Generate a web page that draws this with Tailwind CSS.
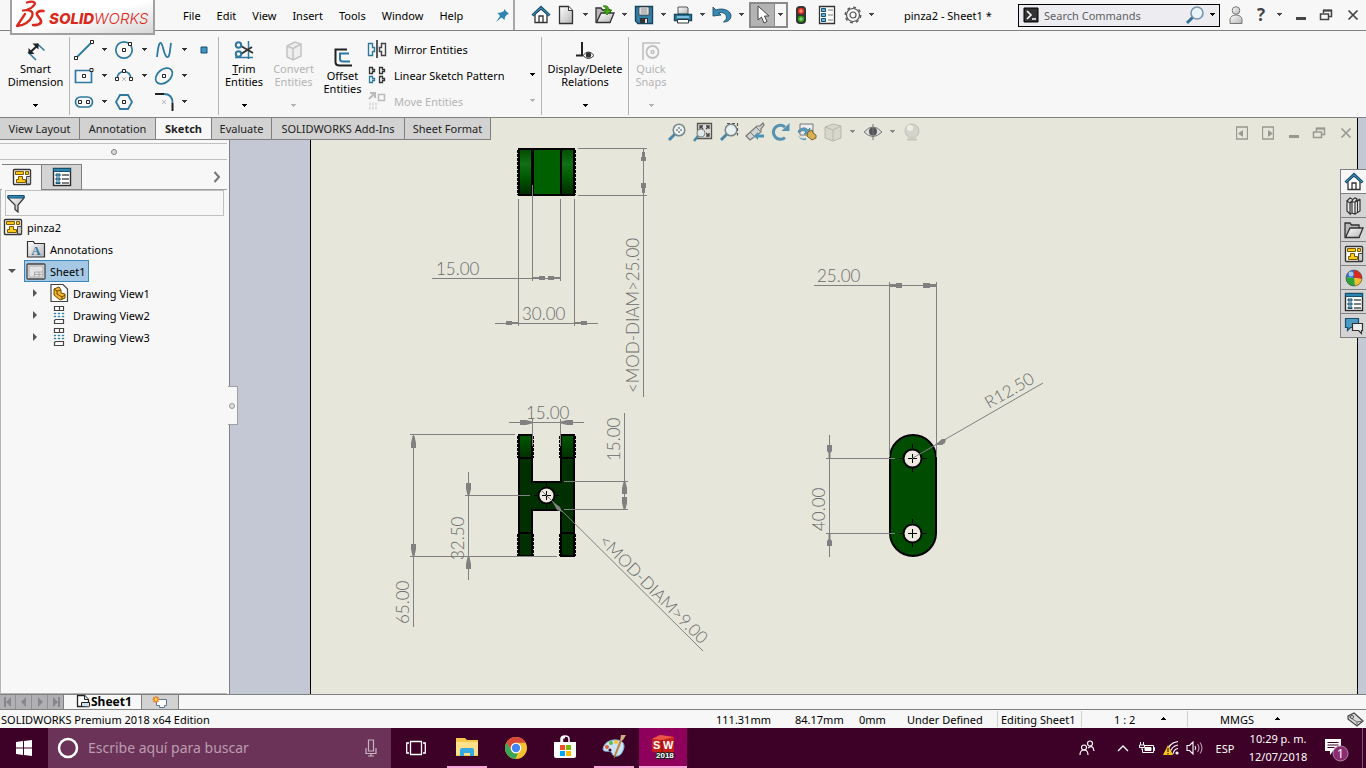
<!DOCTYPE html>
<html lang="en">
<head>
<meta charset="utf-8">
<title>pinza2 - Sheet1</title>
<script src="https://cdn.jsdelivr.net/npm/@tailwindcss/browser@4"></script>
</head>
<body class="h-screen overflow-hidden flex flex-col bg-[#f7f7f7] text-black text-[11px] leading-[13px] font-['Noto_Sans',sans-serif]">

<!-- Shared icons -->
<svg class="absolute size-0" aria-hidden="true">
  <defs>
    <linearGradient id="grey" x1="0" y1="0" x2="1" y2="1"><stop offset="0" stop-color="#fff"/><stop offset="1" stop-color="#b5b5b5"/></linearGradient>
    <linearGradient id="shade" x1="0" y1="0" x2="0" y2="1"><stop offset="0" stop-color="#004a00"/><stop offset=".32" stop-color="#107014"/><stop offset=".6" stop-color="#005a00"/><stop offset="1" stop-color="#002a00"/></linearGradient>
    <linearGradient id="shade2" x1="0" y1="0" x2="0" y2="1"><stop offset="0" stop-color="#005800"/><stop offset="1" stop-color="#003000"/></linearGradient>
    <symbol id="caret" viewBox="0 0 7 4"><path d="M1 0h5v1h-1v1h-1v1h-1v-1h-1v-1h-1z" fill="currentColor"/></symbol>
    <symbol id="caretup" viewBox="0 0 7 4"><path d="M1 3h5v-1h-1v-1h-1v-1h-1v1h-1v1h-1z" fill="currentColor"/></symbol>
    <symbol id="home" viewBox="0 0 20 20"><path d="M4 9v8.500h12V9l-6-5z" fill="#fff" stroke="#333" stroke-width="1.300"/><path d="M1.500 10.500 10 2.500l8.500 8" fill="none" stroke="#174f6e" stroke-width="3"/><path d="M2 10 10 2.800l8 7.200" fill="none" stroke="#4aa0c8" stroke-width="1"/><path d="M8 17v-6h4v6" fill="none" stroke="#333" stroke-width="1.300"/></symbol>
    <symbol id="draw" viewBox="0 0 20 20"><rect x="1.500" y="2.500" width="17" height="15" rx="1" fill="#fff" stroke="#333" stroke-width="1.400"/><path d="M3.500 4.500h8v3h-8zM13.500 4.500h3v3h-3zM6.500 9.500h4v3h3v3h-9v-3h2z" fill="#fbc91c" stroke="#7d5900" stroke-width="1"/><path d="M14.500 17V9.500h4V17z" fill="#ccc" stroke="#444"/></symbol>
    <symbol id="list" viewBox="0 0 20 20"><rect x="1.500" y="1.500" width="17" height="17" fill="#fff" stroke="#2c2c2c" stroke-width="1.400"/><path d="M1.500 1.500h17v3h-17z" fill="#2d86b0" stroke="#174f6e"/><path d="M4 7h4v2H4zM4 11h4v2H4zM4 15h4v1.500H4z" fill="#6fc1e5" stroke="#174f6e"/><path d="M10 8h7M10 12h7M10 16h7" stroke="#555" stroke-width="1.300"/></symbol>
    <symbol id="folder" viewBox="0 0 20 20"><path d="M1 17V3h5l1.500 2H15v12z" fill="#b9b9b9" stroke="#333" stroke-width="1.300"/><path d="M1.500 17.500 6 8h13l-4 9.500z" fill="url(#grey)" stroke="#333" stroke-width="1.300"/></symbol>
    <symbol id="view" viewBox="0 0 14 20"><path d="M2.500 1.500h9v4h-9zM7.500 1.500v4M3.500 14.500h8v4h-9v-3z" fill="#fff" stroke="#444" stroke-width="1.200"/><path d="M2 8h2v1H2zM6 8h2v1H6zM10 8h2v1h-2zM2 11h2v1H2zM6 11h2v1H6zM10 11h2v1h-2z" fill="#2d86b0" stroke="#2d86b0" stroke-width=".4"/></symbol>
    <symbol id="restore" viewBox="0 0 14 12"><path d="M4.500 4V1.500h8v6H10" fill="none" stroke="currentColor" stroke-width="1.500"/><path d="M4 1.500h9" stroke="currentColor" stroke-width="2"/><path d="M1.500 5h8v5.500h-8z" fill="none" stroke="currentColor" stroke-width="1.500"/></symbol>
    <symbol id="close" viewBox="0 0 12 12"><path d="M1.500 1.500l9 9M10.500 1.500l-9 9" stroke="currentColor" stroke-width="1.700"/></symbol>
    <symbol id="min" viewBox="0 0 12 12"><path d="M1 8h10v3H1z" fill="currentColor"/></symbol>
    <symbol id="lens" viewBox="0 0 20 20"><path d="M8.500 11.500 2 18" stroke="#4a87a8" stroke-width="3"/><circle cx="12" cy="8" r="5.800" fill="#e9f1f2" stroke="#7d8687" stroke-width="1.500"/></symbol>
  </defs>
</svg>

<!-- Title bar -->
<header class="relative z-20 h-[31px] shrink-0 flex items-center border-b border-[#808080]">
  <div class="self-start z-10 ml-[10px] w-[145px] h-[35px] flex items-center border-x-2 border-b-2 border-[#a0a0a0] bg-linear-to-br from-white via-white to-[#d6d6d6] text-[#da291c] overflow-hidden">
    <svg class="w-[37px] h-[33px] shrink-0" viewBox="0 0 37 33" fill="none" stroke="#da291c" stroke-linecap="round" stroke-linejoin="round"><path d="M15 2.500c5-2 9-.5 7.500 2-1.500 2.500-4 4-7 5" stroke-width="2.300"/><path d="M11 10.500c7-1.500 11 1 9 6-2 5-8 9-15 9.500L13 14" stroke-width="2.300"/><path d="M31.500 11c-5-.5-8 1.500-6 4.500l3 4c2 4-2 6-7.500 5.500" stroke-width="2.600"/></svg>
    <span class="font-['Inter',sans-serif] italic text-[15px] leading-4 mt-1 whitespace-nowrap"><b class="font-extrabold">SOLID</b><span class="font-light">WORKS</span></span>
  </div>
  <nav class="ml-[28px] w-[312px] flex items-center gap-4">
    <button>File</button><button>Edit</button><button>View</button><button>Insert</button><button>Tools</button><button>Window</button><button>Help</button>
  </nav>
  <button aria-label="Pin menu" class="w-4 mr-[2px] shrink-0"><svg class="size-4" viewBox="0 0 16 16"><path d="M9 2l5 5-2 .5-2 2.500-.5 3L6.500 10.500 1 15l4-6L2.500 6l3.500-.500L9 4z" fill="#2e84b3"/></svg></button>
  <div class="w-[3px] h-[30px] border-l-2 border-[#a8a8a8] shrink-0"></div>
  <div class="ml-[15px] flex items-center shrink-0 text-[#444]">
    <button aria-label="Home" class="w-[22px]"><svg class="size-5"><use href="#home"/></svg></button>
    <button aria-label="New" class="w-[26px] flex justify-center"><svg class="size-5" viewBox="0 0 20 20"><path d="M3.500 1.500h9l4 4v13h-13z" fill="url(#grey)" stroke="#333" stroke-width="1.300"/><path d="M12.500 1.500v4h4" fill="#fff" stroke="#333"/></svg></button>
    <svg class="w-[7px] h-1 mx-[3px]"><use href="#caret"/></svg>
    <button aria-label="Open" class="w-[26px] flex justify-center"><svg class="size-5" viewBox="0 0 20 20"><use href="#folder" width="20" height="20"/><path d="M8 1c4-1 6 1 6 4h3l-5 5-4-5h3c0-2-1-3-3-4z" fill="#42a313" stroke="#236b00" stroke-width=".7"/></svg></button>
    <svg class="w-[7px] h-1 mx-[3px]"><use href="#caret"/></svg>
    <button aria-label="Save" class="w-[26px] flex justify-center"><svg class="size-5" viewBox="0 0 20 20"><path d="M1.500 1.500h17v17H4l-2.500-2.500z" fill="#347fa4" stroke="#17465f" stroke-width="1.400"/><path d="M5 2h10v8H5z" fill="#fff" stroke="#333" stroke-width=".8"/><path d="M6.500 4h7M6.500 6h7M6.500 8h7" stroke="#777"/><path d="M6 13h8v5H6z" fill="#333"/><path d="M11 14h2v4h-2z" fill="#ddd"/></svg></button>
    <svg class="w-[7px] h-1 mx-[3px]"><use href="#caret"/></svg>
    <button aria-label="Print" class="w-[26px] flex justify-center"><svg class="size-5" viewBox="0 0 20 20"><path d="M5 9V2h9l1 1v6z" fill="url(#grey)" stroke="#555"/><path d="M1.500 9.500h17v6h-17z" fill="#337fa5" stroke="#17465f" stroke-width="1.400"/><path d="M4 12h12" stroke="#9bd4ee" stroke-width="1.500"/><path d="M4.500 14.500h11v3.500h-11z" fill="#fff" stroke="#333"/></svg></button>
    <svg class="w-[7px] h-1 mx-[3px]"><use href="#caret"/></svg>
    <button aria-label="Undo" class="w-[26px] flex justify-center"><svg class="size-5" viewBox="0 0 20 20"><path d="M1 2v9l8-1-2.500-2.200c4-1 8 1 8 4.200 0 2-1 3.500-3 5 5 0 7.500-3 7.500-6.500C18.500 5 10 2.500 4 5z" fill="#3a8bb3" stroke="#1c4f6b" stroke-width=".9"/></svg></button>
    <svg class="w-[7px] h-1 mx-[3px]"><use href="#caret"/></svg>
    <div class="ml-[1px] flex h-[26px] w-[39px] border-2 border-[#8a8a8a]">
      <button aria-label="Select" class="flex items-center justify-center w-6 bg-[#b4b4b4] border-r border-[#8a8a8a]"><svg class="w-4 h-5" viewBox="0 0 16 20"><path d="M3 1v14l3.500-3 2.500 6 3-1.500-2.500-5.500H14z" fill="#fff" stroke="#444"/></svg></button>
      <button aria-label="Select options" class="flex-1 flex items-center justify-center"><svg class="w-[7px] h-1"><use href="#caret"/></svg></button>
    </div>
    <button aria-label="Rebuild" class="w-[26px] flex justify-center"><svg class="size-5" viewBox="0 0 20 20"><rect x="5" y="1" width="10" height="18" rx="4" fill="#333"/><circle cx="10" cy="6" r="3.200" fill="#e0311c"/><circle cx="10" cy="14" r="3.200" fill="#2c9a16"/><path d="M8 6h4M10 4v4M8 14h4M10 12v4" stroke="#fff" stroke-opacity=".5"/></svg></button>
    <button aria-label="File properties" class="w-[26px] flex justify-center"><svg class="size-5" viewBox="0 0 20 20"><path d="M2.500 1.500h15v17h-15z" fill="#fff" stroke="#333" stroke-width="1.300"/><path d="M4.500 3.500h4v3h-4zM4.500 8.500h4v3h-4zM4.500 13.500h4v3h-4z" fill="#66b6dc" stroke="#174f6e"/><path d="M11 5h5M11 10h5M11 15h5" stroke="#777"/></svg></button>
    <button aria-label="Options" class="w-[26px] flex justify-center"><svg class="size-5" viewBox="0 0 20 20" fill="none" stroke="#555"><circle cx="10" cy="10" r="7.800" stroke-width="1.300" stroke-dasharray="3 3.100"/><circle cx="10" cy="10" r="6.500" stroke-width="1.200"/><circle cx="10" cy="10" r="3" stroke-width="1.200"/></svg></button>
    <svg class="w-[7px] h-1 ml-[2px]"><use href="#caret"/></svg>
  </div>
  <div class="flex-1 ml-[29px]">pinza2 - Sheet1 *</div>
  <div class="flex items-center h-[23px] w-[202px] border border-black bg-[#ececf1] shrink-0">
    <svg class="size-4 ml-1 shrink-0" viewBox="0 0 16 16"><path d="M1 1h14v14H1z" fill="#333" stroke="#000"/><path d="M4 4l4 4-4 4M9 12h4" stroke="#fff" stroke-width="1.600" fill="none"/></svg>
    <input aria-label="Search Commands" placeholder="Search Commands" class="ml-[5px] w-32 flex-1 outline-none bg-transparent placeholder:text-[#5f5f5f]">
    <svg class="size-5 shrink-0" viewBox="0 0 20 20"><path d="M8 12 2 18" stroke="#35729a" stroke-width="3"/><circle cx="12" cy="8" r="6" fill="#e8f3fa" stroke="#7793ab" stroke-width="1.600"/></svg>
    <svg class="w-[7px] h-1 ml-[4px] mr-[3px] shrink-0"><use href="#caret"/></svg>
  </div>
  <div class="flex items-center shrink-0 ml-2 pr-[7px] text-[#444]">
    <button aria-label="Log in"><svg class="w-4 h-5" viewBox="0 0 16 20"><circle cx="8" cy="5.500" r="3.800" fill="url(#grey)" stroke="#777"/><path d="M2 18.500v-4c0-6 12-6 12 0v4z" fill="url(#grey)" stroke="#777"/></svg></button>
    <button class="ml-[10px] w-[14px] font-bold text-[17px] leading-5 font-['Open_Sans',sans-serif]">?</button>
    <svg class="w-[7px] h-1 ml-2"><use href="#caret"/></svg>
    <button aria-label="Minimize" class="ml-3"><svg class="size-3"><use href="#min"/></svg></button>
    <button aria-label="Restore" class="ml-[12px]"><svg class="w-[14px] h-3"><use href="#restore"/></svg></button>
    <button aria-label="Close" class="ml-[14px]"><svg class="size-3"><use href="#close"/></svg></button>
  </div>
</header>

<!-- Ribbon -->
<section class="h-[87px] shrink-0 flex pt-[6px] pb-[2px] border-b border-[#808080] text-center text-[#333]">
  <button class="w-[69px] flex flex-col items-center pt-[3px] pl-[2px] text-black">
    <svg class="w-5 h-[22px]" viewBox="0 0 20 22" fill="none"><path d="M11 3.500l7.500 7M2 12l8 8" stroke="#2d79a0" stroke-width="1.600"/><path d="M4 12.500 12 5" stroke="#222" stroke-width="2"/><path d="M2.500 14V8l6 6zM12.500 3.500v6l-6-6z" fill="#222"/></svg>
    <span>Smart<br>Dimension</span><svg class="w-[7px] h-1 mt-4"><use href="#caret"/></svg>
  </button>
  <div class="w-[150px] h-[78px] border-x border-[#b5b5b5] pl-1 grid grid-cols-[20px_20px_20px_20px_20px_20px_20px] grid-rows-3 items-center justify-items-center">
    <button aria-label="Line"><svg class="size-5" viewBox="0 0 20 20"><path d="M3 17 17 3" stroke="#2d79a0" stroke-width="1.800"/><path d="M.500 16.500h3v3h-3zM16.500 .500h3v3h-3z" fill="#fff" stroke="#222"/></svg></button><svg class="w-[7px] h-1"><use href="#caret"/></svg>
    <button aria-label="Circle"><svg class="size-5" viewBox="0 0 20 20"><circle cx="10" cy="10" r="8.200" fill="none" stroke="#2d79a0" stroke-width="1.700"/><path d="M8.500 8.500h3v3h-3zM14.500 2.500h3v3h-3z" fill="#fff" stroke="#222"/></svg></button><svg class="w-[7px] h-1"><use href="#caret"/></svg>
    <button aria-label="Spline"><svg class="size-5" viewBox="0 0 20 20"><path d="M3 17C4 8 5 2 7 3s3 13 6 14 3-8 4-14" fill="none" stroke="#2d79a0" stroke-width="1.800"/></svg></button><svg class="w-[7px] h-1"><use href="#caret"/></svg>
    <button aria-label="Point"><svg class="size-2" viewBox="0 0 8 8"><path d="M1 1h6v6H1z" fill="#3f95c0" stroke="#174f6e"/></svg></button>
    <button aria-label="Rectangle"><svg class="size-5" viewBox="0 0 20 20"><path d="M1.500 4.500h16v12h-16z" fill="none" stroke="#2d79a0" stroke-width="1.700"/><path d="M8.500 8.500h3v3h-3zM16 2.500h3v3h-3z" fill="#fff" stroke="#222"/></svg></button><svg class="w-[7px] h-1"><use href="#caret"/></svg>
    <button aria-label="Arc"><svg class="size-5" viewBox="0 0 20 20"><path d="M3 13C3 3 17 3 17 13" fill="none" stroke="#2d79a0" stroke-width="1.700"/><path d="M8.500 3.500h3v3h-3zM1.500 11.500h3v3h-3zM15.500 11.500h3v3h-3z" fill="#fff" stroke="#222"/><path d="M8 11l4 4M12 11l-4 4" stroke="#bbb"/></svg></button><svg class="w-[7px] h-1"><use href="#caret"/></svg>
    <button aria-label="Ellipse"><svg class="size-5" viewBox="0 0 20 20"><ellipse cx="10" cy="10" rx="9.500" ry="6.500" transform="rotate(-40 10 10)" fill="none" stroke="#2d79a0" stroke-width="1.700"/><path d="M8.500 8.500h3v3h-3z" fill="#fff" stroke="#222"/></svg></button><svg class="w-[7px] h-1"><use href="#caret"/></svg><span></span>
    <button aria-label="Slot"><svg class="size-5" viewBox="0 0 20 20"><rect x="1.500" y="5" width="17" height="10" rx="5" fill="none" stroke="#2d79a0" stroke-width="1.700"/><path d="M4.500 8.500h3v3h-3zM12.500 8.500h3v3h-3z" fill="#fff" stroke="#222"/></svg></button><svg class="w-[7px] h-1"><use href="#caret"/></svg>
    <button aria-label="Polygon"><svg class="size-5" viewBox="0 0 20 20"><path d="M6 3h8l4 7-4 7H6l-4-7z" fill="none" stroke="#2d79a0" stroke-width="1.800"/><path d="M8.500 8.500h3v3h-3z" fill="#fff" stroke="#222"/></svg></button><span></span>
    <button aria-label="Fillet"><svg class="size-5" viewBox="0 0 20 20" fill="none"><path d="M1 2h9M18.500 11v8" stroke="#222" stroke-width="2"/><path d="M10 2c6 0 8.500 3 8.500 9" stroke="#2d79a0" stroke-width="1.800"/><path d="M8 8l4 4M12 8l-4 4" stroke="#bbb"/></svg></button><svg class="w-[7px] h-1"><use href="#caret"/></svg><span></span>
  </div>
  <button class="w-[50px] flex flex-col items-center pt-[3px] text-black">
    <svg class="w-5 h-[22px]" viewBox="0 0 20 22"><path d="M14.500 1v18M1 17.500h18" stroke="#2d79a0" stroke-width="1.500"/><path d="M7 6l12 7M7 14l11-7" stroke="#333" stroke-width="2"/><circle cx="4.500" cy="5" r="2.700" fill="none" stroke="#2d79a0" stroke-width="2"/><circle cx="4.500" cy="14" r="2.700" fill="none" stroke="#2d79a0" stroke-width="2"/></svg>
    <span><u>T</u>rim<br>Entities</span><svg class="w-[7px] h-1 mt-4"><use href="#caret"/></svg>
  </button>
  <button disabled class="w-[49px] flex flex-col items-center pt-[3px] text-[#b4b4b4]">
    <svg class="w-5 h-[22px]" viewBox="0 0 20 22" fill="#eee" stroke="#c4c4c4" stroke-width="1.500"><path d="M3 6l8-4 6 2v12l-8 4-6-3zM3 6l6 2.500V20M9 8.500 17 4"/></svg>
    <span>Convert<br>Entities</span><svg class="w-[7px] h-1 mt-4"><use href="#caret"/></svg>
  </button>
  <button class="w-[49px] flex flex-col items-center pt-[10px] text-black">
    <svg class="w-5 h-[22px]" viewBox="0 0 20 22" fill="none"><path d="M14 2.500H2.500V15q0 3.500 4 3.500H19" stroke="#222" stroke-width="2"/><path d="M16 6.500H7V12q0 2.500 3 2.500h7" stroke="#2d79a0" stroke-width="2"/></svg>
    <span>Offset<br>Entities</span>
  </button>
  <div class="w-[175px] h-[78px] border-r border-[#b5b5b5] flex flex-col text-left text-black">
    <button class="h-[26px] pb-[2px] flex items-center gap-[7px]"><svg class="size-5" viewBox="0 0 20 20" fill="none"><path d="M1.500 4.500h4v4h2v4h-2v4h-4z" stroke="#2d79a0" stroke-width="1.400"/><path d="M10 1v18" stroke="#222" stroke-width="1.500"/><path d="M18.500 4.500h-4v4h-2v4h2v4h4z" stroke="#444" stroke-width="1.400"/></svg>Mirror Entities</button>
    <button class="h-[26px] pb-[2px] flex items-center gap-[7px] text-left"><svg class="size-5" viewBox="0 0 20 20" fill="none" stroke="#333" stroke-width="1.300"><path d="M2.500 2.500h3v2h2v2h-2v2h-3zM12.500 2.500h3v2h2v2h-2v2h-3zM12.500 11.500h3v2h2v2h-2v2h-3z"/><path d="M2.500 11.500h3v2h2v2h-2v2h-3z" stroke="#2d79a0"/></svg><span class="flex-1">Linear Sketch Pattern</span><svg class="w-[7px] h-1 mr-[5px]"><use href="#caret"/></svg></button>
    <button disabled class="h-[26px] pb-[2px] flex items-center gap-[7px] text-left text-[#b4b4b4]"><svg class="size-5" viewBox="0 0 20 20" fill="none"><path d="M2 8l5-5M3 2h5v5" stroke="#bbb" stroke-width="2"/><path d="M11.500 3.500h6v6h-6z" stroke="#bbb" stroke-width="1.500"/><path d="M2 13h8M2 17h8" stroke="#ddd" stroke-width="3" stroke-dasharray="2 1"/></svg><span class="flex-1">Move Entities</span><svg class="w-[7px] h-1 mr-[5px]"><use href="#caret"/></svg></button>
  </div>
  <button class="w-[87px] h-[78px] border-r border-[#b5b5b5] flex flex-col items-center pt-[3px] text-black">
    <svg class="w-5 h-[22px]" viewBox="0 0 20 22"><path d="M7 2v13M1 15.500h7" stroke="#222" stroke-width="2"/><path d="M8 15.500q5.500-7 11 0-5.500 6-11 0z" fill="#fff" stroke="#333"/><circle cx="13.500" cy="15" r="2.700" fill="#333"/></svg>
    <span>Display/Delete<br>Relations</span><svg class="w-[7px] h-1 mt-4"><use href="#caret"/></svg>
  </button>
  <button disabled class="w-11 flex flex-col items-center pt-[3px] text-[#b4b4b4]">
    <svg class="w-5 h-[22px]" viewBox="0 0 20 22" fill="none" stroke="#c0c0c0"><path d="M2 20V3h17" stroke-width="1.600"/><circle cx="11.500" cy="12" r="6" stroke-width="1.800"/><circle cx="11.500" cy="12" r="1.500" stroke-width="1.500"/></svg>
    <span>Quick<br>Snaps</span><svg class="w-[7px] h-1 mt-4"><use href="#caret"/></svg>
  </button>
</section>

<main class="relative flex-1 min-h-0 flex">
  <!-- Command tabs -->
  <nav class="absolute z-10 left-0 top-0 h-[22px] w-[491px] flex border-b border-[#808080] bg-[#d2d2d2] text-[#222]">
    <button class="w-20 border-r border-[#808080]">View Layout</button>
    <button class="w-[76px] border-r border-[#808080]">Annotation</button>
    <button class="w-[55px] bg-[#f7f7f7] font-bold">Sketch</button>
    <button class="w-[61px] border-x border-[#808080]">Evaluate</button>
    <button class="w-[133px] border-r border-[#808080]">SOLIDWORKS Add-Ins</button>
    <button class="flex-1 border-r border-[#808080]">Sheet Format</button>
  </nav>

  <!-- Feature tree -->
  <aside class="relative w-[230px] shrink-0 pt-[22px] flex flex-col border-r border-[#808080]">
    <div class="mt-[3px] mr-[2px] h-[17px] border-y border-[#c0c0c0] flex items-center justify-center"><span class="size-[6px] rounded-full border border-[#808080] bg-[#ddd]"></span></div>
    <div class="mt-[4px] mr-[2px] h-[26px] flex items-center border-b border-[#a0a0a0]">
      <button aria-label="Tree" class="ml-[2px] w-[39px] h-[26px] border-t border-[#808080] bg-[#f7f7f7] flex items-center justify-center"><svg class="size-5"><use href="#draw"/></svg></button>
      <button aria-label="Properties" class="w-[41px] h-[26px] border border-[#808080] bg-[#d4d4d4] flex items-center justify-center"><svg class="size-5"><use href="#list"/></svg></button>
      <button aria-label="More" class="ml-auto mr-[6px]"><svg class="w-2 h-3" viewBox="0 0 8 12"><path d="M1.500 1l4.500 5-4.500 5" fill="none" stroke="#777" stroke-width="2"/></svg></button>
    </div>
    <div class="flex-1 mr-[2px] border-l border-b border-[#b5b5b5]">
      <div class="ml-1 mr-[3px] h-[26px] flex items-center border border-[#c0c0c0]">
        <svg class="size-5" viewBox="0 0 20 20"><path d="M2 3h16v2l-6 7v7l-3-2.500V12L2 5z" fill="url(#grey)" stroke="#333" stroke-width="1.200"/><path d="M2 2.500h16v2.500H2z" fill="#348bb5" stroke="#174f6e"/></svg>
        <input aria-label="Filter" class="flex-1 outline-none bg-transparent">
      </div>
      <ul>
        <li class="h-[22px] flex items-center gap-1 pl-[2px]"><svg class="size-5"><use href="#draw"/></svg>pinza2</li>
        <li class="h-[22px] flex items-center gap-1 pl-[25px]"><svg class="size-5" viewBox="0 0 20 20"><path d="M1.500 18V2.500h6l1 2h10V18z" fill="url(#grey)" stroke="#333" stroke-width="1.200"/><text x="10" y="16" text-anchor="middle" font-family="Liberation Serif" font-weight="bold" font-size="13" fill="#2d79a0">A</text></svg>Annotations</li>
        <li class="h-[22px] flex items-center pl-[7px] text-[#555]"><svg class="w-2 h-1 mr-2" viewBox="0 0 8 4"><path d="M0 0h8L4 4z" fill="currentColor"/></svg><span class="flex items-center gap-1 h-[22px] w-[65px] pl-[1px] text-black bg-[#a5c8e4] border border-[#3a87bd]"><svg class="size-5" viewBox="0 0 20 20"><rect x="1" y="3" width="18" height="15" rx="1" fill="#e4e4e4" stroke="#444" stroke-width="1.300"/><path d="M3 5h14v11H3zM8.500 16v-5H17M8.500 13.500H17M13 11v5" fill="none" stroke="#aaa"/></svg>Sheet1</span></li>
        <li class="h-[22px] flex items-center pl-8"><svg class="w-1 h-2 mr-3" viewBox="0 0 4 8"><path d="M0 0v8l4-4z" fill="#555"/></svg><svg class="size-5 mr-1" viewBox="0 0 20 20"><path d="M2 1.500h12l4.500 4.500v12.500H2z" fill="#fff" stroke="#444" stroke-width="1.200"/><path d="M5 6l5-2 2 3v3l4 1v4l-5 2-6-5z" fill="#f0b52a" stroke="#6f4a00"/><path d="M5 6l3 2v3l5 3v3M8 8l4-1M13 14l3-2" fill="none" stroke="#6f4a00"/></svg>Drawing View1</li>
        <li class="h-[22px] flex items-center pl-8"><svg class="w-1 h-2 mr-[15px]" viewBox="0 0 4 8"><path d="M0 0v8l4-4z" fill="#555"/></svg><svg class="w-[14px] h-5 mr-[7px]"><use href="#view"/></svg>Drawing View2</li>
        <li class="h-[22px] flex items-center pl-8"><svg class="w-1 h-2 mr-[15px]" viewBox="0 0 4 8"><path d="M0 0v8l4-4z" fill="#555"/></svg><svg class="w-[14px] h-5 mr-[7px]"><use href="#view"/></svg>Drawing View3</li>
      </ul>
    </div>
    <div class="absolute z-10 -right-[9px] top-[268px] w-[10px] h-[39px] bg-[#f7f7f7] border border-l-0 border-[#a0a0a0] flex items-center pl-[1px]"><span class="size-[6px] rounded-full border border-[#999] bg-[#ddd]"></span></div>
  </aside>

  <!-- Sheet -->
  <section class="relative flex-1 min-w-0 flex overflow-hidden bg-[#c4c8d4]">
    <div class="flex-1 ml-20 mr-2 border-x border-black bg-[#e6e6db]"></div>
    <svg class="absolute left-0 top-0 w-[1136px] h-[576px]" viewBox="230 118 1136 576" fill="none">
      <!-- top view -->
      <g stroke="#000" stroke-width="2">
        <path d="M519 149h13v46h-13zM561 149h13v46h-13z" fill="url(#shade)"/>
        <path d="M533 149h28v46h-28z" fill="#006000"/>
        <path d="M517.500 150v45M575.500 150v45" stroke-width="1" stroke-dasharray="3 1"/>
      </g>
      <!-- front view -->
      <g stroke="#000" stroke-width="2">
        <path d="M519 435h13v47h29v-47h13v121h-13v-46h-29v46h-13z" fill="#003000"/>
        <path d="M519 435h13v23h-13zM561 435h13v23h-13z" fill="url(#shade2)"/>
        <path d="M519 533h13M561 533h13"/>
        <path d="M517.500 436v22M575.500 436v22M517.500 534v22M575.500 534v22M533.500 436v22M533.500 534v22M559.500 436v22M559.500 534v22" stroke-width="1" stroke-dasharray="3 1"/>
        <circle cx="546.500" cy="495.500" r="8" fill="#eeeadf"/>
      </g>
      <!-- side view -->
      <g stroke="#000" stroke-width="2">
        <rect x="890" y="435" width="46" height="121" rx="23" fill="#004c00"/>
        <circle cx="912.500" cy="458.500" r="9" fill="#eeeadf"/><circle cx="912.500" cy="533.500" r="9" fill="#eeeadf"/>
      </g>
      <g stroke="#000" stroke-width="1">
        <path d="M542 495.500h9M546.500 491v9M534 495.500h3M556 495.500h3M546.500 483v3M546.500 505v3"/>
        <path d="M908 458.500h9M912.500 454v9M899 458.500h3M923 458.500h4M912.500 444v4M912.500 468v4"/>
        <path d="M908 533.500h9M912.500 529v9M899 533.500h3M923 533.500h4M912.500 519v4M912.500 543v4"/>
      </g>
      <!-- dimension lines -->
      <g stroke="#808080">
        <path d="M578 148.500h69M578 195.500h69M643.500 148v249M518.500 199v127M574.500 199v127M532.500 185v96M560.500 199v82M432 278.500h129M495 323.500h103"/>
        <path d="M509 422.500h75M532.500 419v27M560.500 419v27M413.500 434v193M410 434.500h105M410 556.500h147M468.500 472v108M465 495.500h65M624.500 413v97M564 481.500h64M564 509.500h64M541 490l162 161"/>
        <path d="M814 285.500h123M889.500 282v175M936.500 282v175M829.500 435v122M826 458.500h69M826 533.500h69M912 458.500l131-75.500"/>
      </g>
      <g fill="#808080">
        <path d="M642 152h3v5h1v4h-5v-4h1zM642 193h3v-5h1v-5h-5v5h1z"/>
        <path d="M533 277h6v-1h6v4h-6v-1h-6zM560 277h-6v-1h-6v4h6v-1h6zM518 322h-6v-1h-6v4h6v-1h6zM575 322h6v-1h6v4h-6v-1h-6z"/>
        <path d="M532 421.500l-6-1.500h-6v5h6l6-1.500zM561 421.500l6-1.500h6v5h-6l-6-1.500z"/>
        <path d="M412.500 436l-1.500 7v5h5v-5l-1.500-7zM412.500 556l-1.500-7v-5h5v5l-1.500 7zM467.500 495l-1.500-6v-6h5v6l-1.500 6zM467.500 557l-1.500 7v5h5v-5l-1.500-7zM623.500 482l-1.500 6v6h5v-6l-1.500-6zM623.500 509l-1.500-6v-6h5v6l-1.500 6z"/>
        <path d="M552 501l5 9 5 2-2-5z"/>
        <path d="M890 284h6v-1h6v5h-6v-1h-6zM936 284h-6v-1h-7v5h7v-1h6zM828.500 458v-5l-1.500-2v-6h5v6l-1.500 2v5zM828.500 534v5l-1.500 2v5h5v-5l-1.500-2v-5z"/>
        <path d="M935 445l7-6 4 0-1 4-3 2z"/>
      </g>
      <g fill="#6a6a6a" font-family="Lato" font-weight="300" font-size="17">
        <text x="436" y="275">15.00</text><text x="522" y="320">30.00</text><text x="526" y="419">15.00</text><text x="817" y="282">25.00</text>
        <text transform="translate(639 393) rotate(-90)">&lt;MOD-DIAM&gt;25.00</text>
        <text transform="translate(620 461) rotate(-90)">15.00</text>
        <text transform="translate(464 560) rotate(-90)">32.50</text>
        <text transform="translate(409 624) rotate(-90)">65.00</text>
        <text transform="translate(825 531) rotate(-90)">40.00</text>
        <text transform="translate(598 542) rotate(45)">&lt;MOD-DIAM&gt;9.00</text>
        <text transform="translate(989 409) rotate(-30)">R12.50</text>
      </g>
    </svg>

    <!-- View toolbar -->
    <div class="absolute left-[437px] top-1 flex items-center text-[#888]">
      <button aria-label="Zoom to fit" class="w-[26px]"><svg class="size-5"><use href="#lens"/><path d="M12 5v6M9 8h6" stroke="#555" stroke-dasharray="2 2"/></svg></button>
      <button aria-label="Zoom to sheet" class="w-[26px]"><svg class="size-5" viewBox="0 0 20 20"><path d="M4.500 1.500h14v15h-14z" fill="#dddcd4" stroke="#555" stroke-width="1.300"/><path d="M7 4l3 3M7 7V4h3M16 4l-3 3M16 7V4h-3M16 14l-3-3M16 11v3h-3" stroke="#444" stroke-width="1.300" fill="none"/><path d="M5 14l-4 5" stroke="#4a87a8" stroke-width="2.500"/><circle cx="8" cy="11" r="4" fill="#dfe8ea" stroke="#888"/></svg></button>
      <button aria-label="Zoom to area" class="w-[26px]"><svg class="size-5"><path d="M8 1.500h10.500v12" fill="none" stroke="#555" stroke-width="1.200" stroke-dasharray="3 2"/><use href="#lens"/></svg></button>
      <button aria-label="Previous view" class="w-[26px]"><svg class="size-5" viewBox="0 0 20 20"><path d="M1 14 12 4l3 0 3-3 1 2-3 4v3L5 18z" fill="#d4d4cf" stroke="#777" stroke-width="1.200"/><path d="M5 10l4 4M11 5l4 4" stroke="#777"/><path d="M9 14l4-4v2.500h6v3h-6V18z" fill="#4a94b8"/></svg></button>
      <button aria-label="Rotate view" class="w-[26px]"><svg class="size-5" viewBox="0 0 20 20" fill="none"><path d="M14 15.500A7 7 0 1 1 14 5" stroke="#5593b0" stroke-width="3"/><path d="M18.500 1v8h-8z" fill="#5593b0"/></svg></button>
      <button aria-label="Drawing view" class="w-[26px]"><svg class="size-5" viewBox="0 0 20 20"><path d="M3 2h13v11H3z" fill="#eee" stroke="#777"/><path d="M1 9q6-6 10-1l2-2v6H7l2-2Q5 7 2 11z" fill="#5b9dbb" stroke="#376e88" stroke-width=".6"/><path d="M11 10l4-2 1 3 3 2v3l-4 2-5-4z" fill="#d8b050" stroke="#7c6530"/><path d="M1 13q3 5 8 3v2q-6 1-8-5z" fill="#5b9dbb"/></svg></button>
      <button aria-label="Display style" class="w-[19px]"><svg class="size-5" viewBox="0 0 20 20" fill="#d8d7cc" stroke="#b9b8ae"><path d="M2 5l8-3 8 2v12l-8 3-8-3zM2 5l8 3v11M10 8l8-4"/></svg></button>
      <svg class="w-[7px] h-1 ml-[7px] mr-[4px]"><use href="#caret"/></svg>
      <button aria-label="Hide or show items" class="w-[26px] flex justify-center"><svg class="size-5" viewBox="0 0 20 20"><path d="M1 10q9-10 18 0-9 9-18 0z" fill="#ddd" stroke="#777"/><circle cx="10" cy="9.500" r="4" fill="#555"/><path d="M10 2v16" stroke="#777"/></svg></button>
      <svg class="w-[7px] h-1 mx-[3px]"><use href="#caret"/></svg>
      <button aria-label="Scene" class="w-[26px] flex justify-center"><svg class="size-5" viewBox="0 0 20 20"><circle cx="10" cy="9" r="7" fill="#d5d4ca" stroke="#c2c1b6"/><circle cx="8" cy="6" r="3" fill="#efeee6"/><path d="M5 17.500h10" stroke="#c8c7bc" stroke-width="2"/></svg></button>
    </div>
    <div class="absolute right-[14px] top-2 grid auto-cols-[26px] grid-flow-col justify-items-end text-[#999991]">
      <button aria-label="Previous pane"><svg class="w-3 h-[14px]" viewBox="0 0 12 14"><path d="M.500 1h11v12H.500z" fill="none" stroke="currentColor" stroke-width="1.300"/><path d="M7 4v7L2 7.500z" fill="currentColor"/></svg></button>
      <button aria-label="Next pane"><svg class="w-3 h-[14px]" viewBox="0 0 12 14"><path d="M.500 1h11v12H.500z" fill="none" stroke="currentColor" stroke-width="1.300"/><path d="M6 4v7l5-3.500z" fill="currentColor"/></svg></button>
      <button aria-label="Minimize document"><svg class="size-3"><use href="#min"/></svg></button>
      <button aria-label="Restore document"><svg class="w-[14px] h-3"><use href="#restore"/></svg></button>
      <button aria-label="Close document"><svg class="size-3"><use href="#close"/></svg></button>
    </div>

    <!-- Task pane -->
    <div class="absolute right-0 top-[51px] w-[26px] grid auto-rows-[24px] border-l border-t border-[#808080] bg-[#d4d4d4]">
      <button aria-label="Resources" class="flex items-center justify-center border-b border-[#808080] bg-[#f7f7f7]"><svg class="size-5"><use href="#home"/></svg></button>
      <button aria-label="Design library" class="flex items-center justify-center border-b border-[#808080]"><svg class="size-5" viewBox="0 0 20 20" fill="#eee" stroke="#333" stroke-width="1.200"><path d="M3 5v10l3 3V7zM6 7l3-3M6 18l2-1V5M3 5l3-3 2 1M8 6v11l3 1V6zM8 4l3-2 2 1-2 3M11 6v12l5-3V4zM11 6l5-3M13.500 5v11"/></svg></button>
      <button aria-label="File explorer" class="flex items-center justify-center border-b border-[#808080]"><svg class="size-5"><use href="#folder"/></svg></button>
      <button aria-label="View palette" class="flex items-center justify-center border-b border-[#808080]"><svg class="size-5"><use href="#draw"/></svg></button>
      <button aria-label="Appearances" class="flex items-center justify-center border-b border-[#808080]"><svg class="size-5" viewBox="0 0 20 20"><path d="M10 10V2a8 8 0 0 0-8 7z" fill="#2c6fd0"/><path d="M10 10V2a8 8 0 0 1 8 9z" fill="#da2b1f"/><path d="M10 10l8 1a8 8 0 0 1-7 7z" fill="#efc02c"/><path d="M10 10l1 8a8 8 0 0 1-9-9z" fill="#2da33a"/><circle cx="10" cy="10" r="8" fill="none" stroke="#444" stroke-opacity=".6"/><circle cx="7" cy="6" r="2.500" fill="#fff" fill-opacity=".6"/></svg></button>
      <button aria-label="Custom properties" class="flex items-center justify-center border-b border-[#808080]"><svg class="size-5"><use href="#list"/></svg></button>
      <button aria-label="Forum" class="flex items-center justify-center border-b border-[#808080]"><svg class="size-5" viewBox="0 0 20 20"><path d="M1.500 2.500h13v9h-8l-3 3v-3h-2z" fill="#4a9ac4" stroke="#174f6e" stroke-width="1.200"/><path d="M8.500 7.500h10v7h-1v3l-3-3h-6z" fill="#eee" stroke="#333" stroke-width="1.200"/></svg></button>
    </div>
  </section>
</main>

<!-- Sheet tabs -->
<nav class="h-4 shrink-0 flex border-y border-[#808080]">
  <div class="w-16 flex bg-[#b0b0b4] text-[#88888c] border-r border-[#808080]">
    <button aria-label="First sheet" class="flex-1 flex items-center justify-center border-r border-[#909094]"><svg class="w-2 h-[10px]" viewBox="0 0 8 10"><path d="M0 0h2v10H0zM7 0v10L2 5z" fill="currentColor"/></svg></button>
    <button aria-label="Previous sheet" class="flex-1 flex items-center justify-center border-r border-[#909094]"><svg class="w-2 h-[10px]" viewBox="0 0 8 10"><path d="M6 0v10L1 5z" fill="currentColor"/></svg></button>
    <button aria-label="Next sheet" class="flex-1 flex items-center justify-center border-r border-[#909094]"><svg class="w-2 h-[10px]" viewBox="0 0 8 10"><path d="M2 0v10l5-5z" fill="currentColor"/></svg></button>
    <button aria-label="Last sheet" class="flex-1 flex items-center justify-center"><svg class="w-2 h-[10px]" viewBox="0 0 8 10"><path d="M6 0h2v10H6zM1 0v10l5-5z" fill="currentColor"/></svg></button>
  </div>
  <button class="w-[77px] flex items-center pl-[12px] pb-[2px] font-bold text-[12px]"><svg class="w-[15px] h-[14px]" viewBox="0 0 15 14"><path d="M1.500 1.500h7l4 4v7h-11z" fill="#fff" stroke="#222" stroke-width="1.300"/><path d="M8.500 1.500v4h4M5.500 12V8.500h8v4" fill="#cfe0f2" stroke="#222"/></svg>Sheet1</button>
  <button aria-label="Add sheet" class="w-[38px] flex items-center justify-center bg-[#d2d2d2] border-x border-[#808080]"><svg class="w-4 h-3" viewBox="0 0 16 12"><path d="M4.500 3.500h10v6h-2v2h-5v-2h-3z" fill="#fff" stroke="#557a9c"/><path d="M4 0v7M.500 3.500h7M1.500 1l5 5M6.500 1l-5 5" stroke="#f27a1a" stroke-width="1.300"/><circle cx="4" cy="3.500" r="1.300" fill="#fff36b"/></svg></button>
</nav>

<!-- Status bar -->
<footer class="h-[18px] shrink-0 flex items-center pl-[1px]">
  <span class="flex-1">SOLIDWORKS Premium 2018 x64 Edition</span>
  <span class="w-[79px]">111.31mm</span><span class="w-16">84.17mm</span><span class="w-12">0mm</span><span class="w-[90px]">Under Defined</span>
  <span class="w-[85px] h-4 pl-[3px] flex items-center border-x border-[#d0d0d0]">Editing Sheet1</span>
  <button class="w-[106px] h-4 pl-8 flex items-center border-r border-[#d0d0d0] text-left"><span class="w-[46px]">1 : 2</span><svg class="w-[7px] h-1"><use href="#caretup"/></svg></button>
  <button class="w-[158px] pl-8 flex items-center text-left"><span class="w-[54px]">MMGS</span><svg class="w-[7px] h-1"><use href="#caretup"/></svg></button>
  <button aria-label="Tags" class="w-5"><svg class="w-[18px] h-4" viewBox="0 0 18 16"><path d="M2 5l6-3 9 8-6 5-9-7z" fill="#ddd" stroke="#444" stroke-width="1.200"/><path d="M2 5l9 6 6-1M11 11v4" fill="none" stroke="#666"/><circle cx="6" cy="6" r="1.500" fill="#fff" stroke="#444"/></svg></button>
</footer>

<!-- Taskbar -->
<footer class="h-10 shrink-0 flex items-center bg-[#3d0026] text-white">
  <button aria-label="Start" class="w-12 flex justify-center"><svg class="size-4" viewBox="0 0 16 16" fill="#fff"><path d="M0 2l7-1v6.500H0zM8 1l8-1v7.500H8zM0 8.500h7V15l-7-1zM8 8.500h8V16l-8-1z"/></svg></button>
  <label class="w-[343px] h-full flex items-center bg-[#6b3357]">
    <svg class="size-6 ml-2" viewBox="0 0 24 24"><circle cx="12" cy="12" r="9" fill="none" stroke="#fff" stroke-width="2.500"/></svg>
    <input aria-label="Escribe aquí para buscar" placeholder="Escribe aquí para buscar" class="flex-1 ml-2 text-[14px] leading-5 bg-transparent outline-none placeholder:text-[#bb9db0]">
    <svg class="w-3 h-[18px] mr-[14px]" viewBox="0 0 12 18" fill="none" stroke="#cbb2c2" stroke-width="1.200"><path d="M3.500 1h5v11h-5zM1 9v5.500h10V9M6 14.500V17M3 17h6"/></svg>
  </label>
  <button aria-label="Task view" class="w-[50px] h-full flex items-center justify-center"><svg class="w-5 h-4" viewBox="0 0 20 16" fill="none" stroke="#fff" stroke-width="1.300"><path d="M4.500 1.500h11v13h-11zM3 3H.700v10H3M17 3h2.300v10H17"/></svg></button>
  <button aria-label="Explorer" class="ml-[6px] w-10 h-full border-b-2 border-[#f8a5da] flex items-center justify-center"><svg class="w-[22px] h-5" viewBox="0 0 22 20"><path d="M0 1h9l2 2h11v16H0z" fill="#f5c84b"/><path d="M0 5h22v13H0z" fill="#fde08a"/><path d="M4 19v-6q0-2 2-2h10q2 0 2 2v6h-4v-3H8v3z" fill="#35a9e2"/></svg></button>
  <button aria-label="Chrome" class="ml-1 w-[50px] h-full flex items-center justify-center"><svg class="size-[22px]" viewBox="0 0 22 22"><circle cx="11" cy="11" r="11" fill="#f6c12e"/><path d="M1.500 5.500A11 11 0 0 1 20.600 5.700H11A5.400 5.400 0 0 0 6.300 13.700z" fill="#d94a3d"/><path d="M1.500 5.500 6.300 13.700A5.400 5.400 0 0 0 13 16L10.500 22A11 11 0 0 1 1.500 5.500z" fill="#3ba457"/><circle cx="11" cy="11" r="5.300" fill="#fff"/><circle cx="11" cy="11" r="4.200" fill="#4285f4"/></svg></button>
  <button aria-label="Store" class="w-[47px] h-full pb-[2px] flex items-center justify-center"><svg class="w-6 h-[26px]" viewBox="0 0 24 26"><path d="M8 9V5q0-3 4-3t4 3v4M9.500 8V5q0-1.500 2.500-1.500" fill="none" stroke="#fff" stroke-width="1.500"/><path d="M1 8h22v14q0 2-2 2H3q-2 0-2-2z" fill="#fff"/><path d="M7 11h5v5H7z" fill="#f25022"/><path d="M13 11h5v5h-5z" fill="#7fba00"/><path d="M7 17h5v5H7z" fill="#00a4ef"/><path d="M13 17h5v5h-5z" fill="#ffb900"/></svg></button>
  <button aria-label="Paint" class="ml-[6px] w-10 h-full border-b-2 border-[#f8a5da] flex items-center justify-center"><svg class="size-6" viewBox="0 0 24 24"><path d="M1 14C2 6 12 3 19 6c5 3 3 9 0 13-4 4-9 2-9-1-1-3-9 0-9-4z" fill="#c9e4f5" stroke="#7aa5c5"/><circle cx="5" cy="12" r="2" fill="#e05a3c"/><circle cx="9" cy="8" r="2" fill="#5fbb46"/><circle cx="14" cy="7" r="2" fill="#f1c232"/><circle cx="8" cy="15" r="1.500" fill="#3d0026"/><path d="M22 1 19 7l-6 15-1 1 1-4 5-13z" fill="#e8973a" stroke="#9c5a1c" stroke-width=".6"/><path d="M19 0h5l-3 5-3 1z" fill="#cfae85"/></svg></button>
  <button aria-label="SOLIDWORKS 2018" class="ml-[5px] w-12 h-full bg-[#8f005c] border-b-2 border-[#f8a5da] flex items-center justify-center"><svg class="w-6 h-7" viewBox="0 0 24 28"><path d="M1 6l8-4 14 2v15l-12 3-10-4z" fill="#c9201c"/><path d="M1 6l8-4 14 2-12 3z" fill="#ea5548"/><path d="M11 7v13" stroke="#7d0d0c"/><text x="2" y="16" font-family="Liberation Sans" font-weight="bold" font-size="11" fill="#fff">S</text><text x="12" y="16" font-family="Liberation Sans" font-weight="bold" font-size="11" fill="#fff">W</text><text x="5" y="25" font-family="Liberation Sans" font-weight="bold" font-size="8" fill="#fff" stroke="#222" stroke-width="2" paint-order="stroke">2018</text></svg></button>
  <div class="ml-auto h-full flex items-center">
    <button aria-label="People" class="w-4"><svg class="size-4" viewBox="0 0 16 16" fill="none" stroke="#fff" stroke-width="1.200"><circle cx="5" cy="7.500" r="2.500"/><path d="M1 15q0-5 4-5t4 5"/><circle cx="11" cy="3.500" r="2.500"/><path d="M9 8q5-4 6 3"/></svg></button>
    <button aria-label="Hidden icons" class="ml-[22px]"><svg class="w-3 h-2" viewBox="0 0 12 8"><path d="M1 7l5-5 5 5" fill="none" stroke="#fff" stroke-width="1.300"/></svg></button>
    <button aria-label="Battery" class="ml-[10px]"><svg class="w-4 h-3" viewBox="0 0 16 12" fill="none" stroke="#fff"><path d="M5 3.500h9.500v7H3.500V7"/><path d="M14.500 5.500h1v3h-1M1.500 0v3M4.500 0v3M.500 3h5v2.500h-5zM3 5.500V8"/><path d="M6 5.500h6v3H6z" fill="#fff"/></svg></button>
    <button aria-label="Network" class="ml-2"><svg class="size-4" viewBox="0 0 16 16" fill="none" stroke="#fff" stroke-width="1.200"><path d="M4 13Q5 3 15 1.500M7 14q1-8 8-9M10 14q1-5 5-5.500"/><circle cx="14" cy="13" r="1" fill="#fff"/><path d="M5 5l5 10H0z" fill="#fbc31c" stroke="none"/><path d="M5 8v4M5 13v1.500" stroke="#222"/></svg></button>
    <button aria-label="Volume" class="ml-[7px]"><svg class="w-[17px] h-4" viewBox="0 0 17 16" fill="none" stroke="#fff" stroke-width="1.100"><path d="M1 5.500h2.500L7 2v12l-3.500-3.500H1zM9 6q1.500 2 0 4"/><path d="M11.500 4q3 4 0 8M14 2.500q4 5.500 0 11" stroke="#b79aac"/></svg></button>
    <button class="ml-3 w-5">ESP</button>
    <button class="ml-3 w-[62px] leading-[18px] text-center whitespace-nowrap">10:29 p. m.<br>12/07/2018</button>
    <button aria-label="Notifications" class="ml-[15px] w-[26px] pt-[3px]"><svg class="w-[26px] h-6" viewBox="0 0 26 24"><path d="M1 1h16v12H9l-3 4v-4H1z" fill="#fff"/><path d="M3.500 4.500h11M3.500 7h11M3.500 9.500h7" stroke="#3d0026"/><circle cx="16.500" cy="15.500" r="7.500" fill="#8a2c72" stroke="#b584a6"/><text x="16.500" y="20" text-anchor="middle" font-family="Noto Sans" font-size="12" fill="#fff">1</text></svg></button>
    <span class="ml-3 mr-[3px] w-px h-full bg-[#80566f]"></span>
  </div>
</footer>
</body>
</html>
